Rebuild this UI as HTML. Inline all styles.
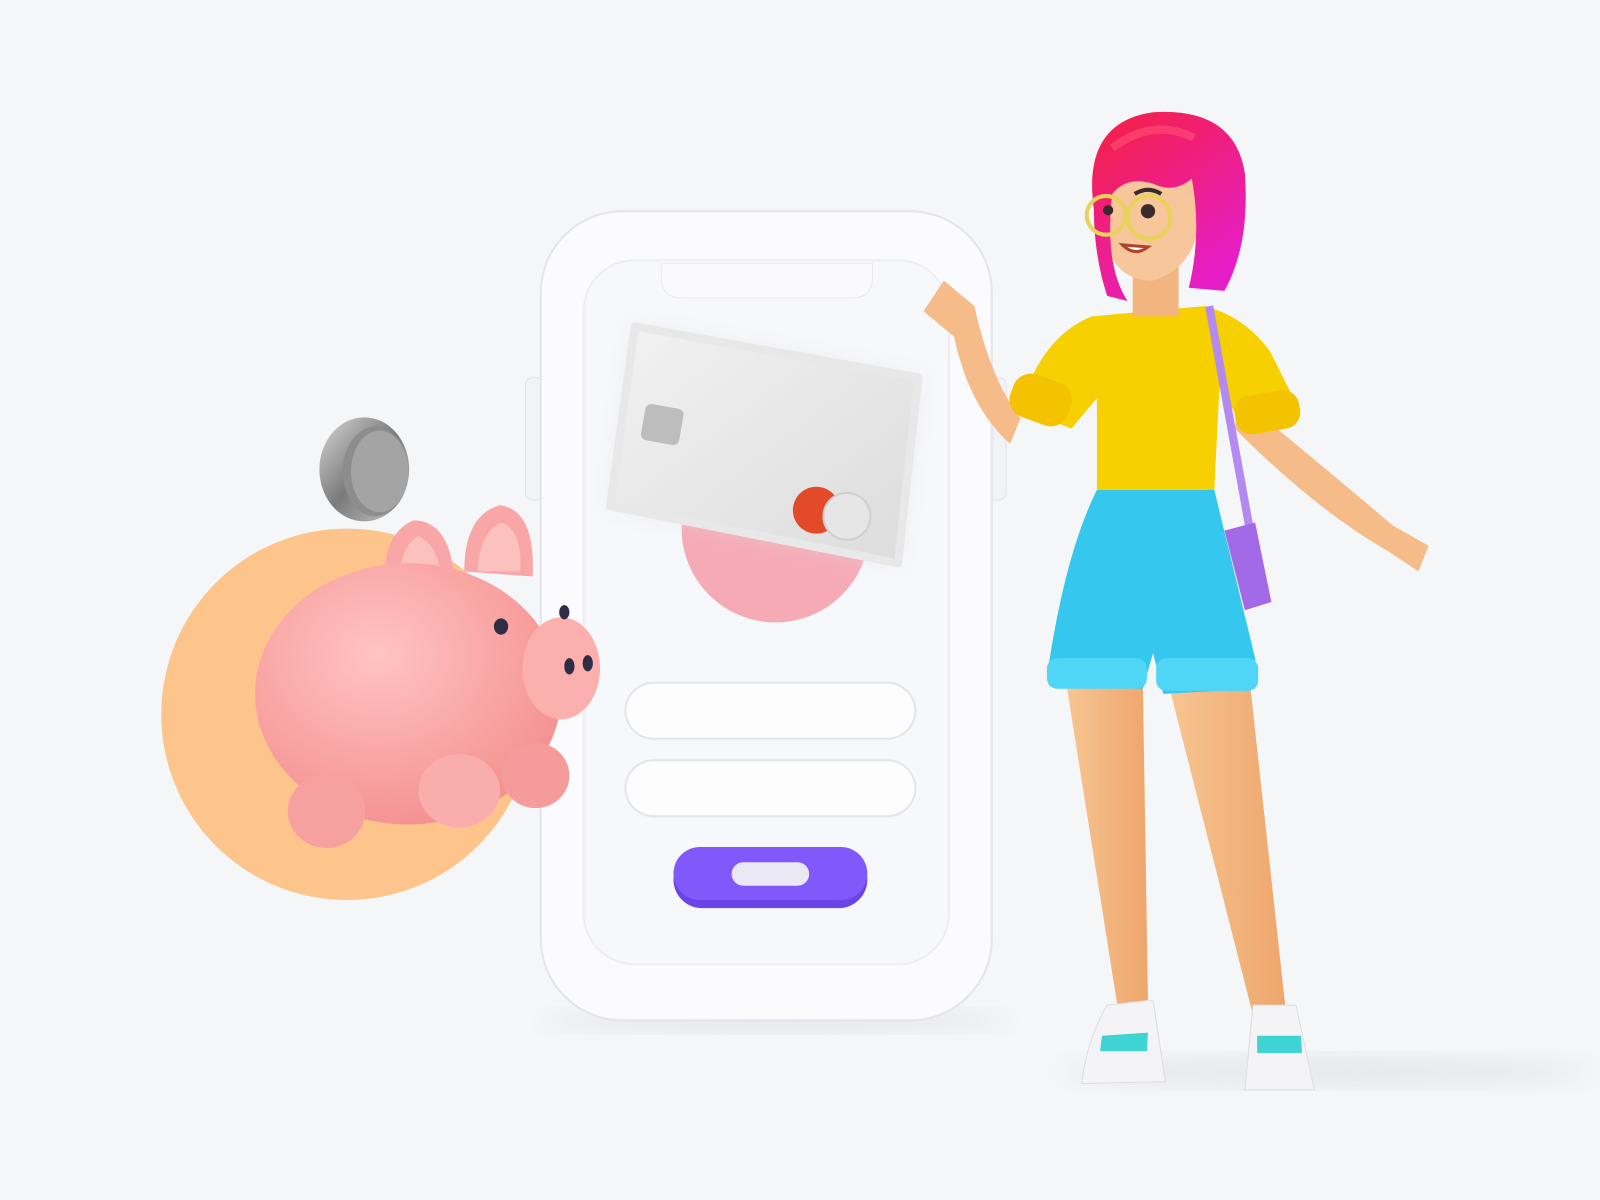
<!DOCTYPE html>
<html><head><meta charset="utf-8"><style>
html,body{margin:0;padding:0;background:#f5f6f8;width:1600px;height:1200px;overflow:hidden}
svg{display:block}
</style></head><body>
<svg width="1600" height="1200" viewBox="0 0 1568 1176" preserveAspectRatio="none" xmlns="http://www.w3.org/2000/svg">
<defs>
<radialGradient id="pig" cx="0.4" cy="0.35" r="0.7"><stop offset="0" stop-color="#ffc4c2"/><stop offset="1" stop-color="#f48f8f"/></radialGradient>
<linearGradient id="coin" x1="0" y1="0" x2="1" y2="1"><stop offset="0" stop-color="#d8d8d8"/><stop offset="0.5" stop-color="#7a7a7a"/><stop offset="1" stop-color="#c8c8c8"/></linearGradient>
<linearGradient id="card" x1="0" y1="0" x2="1" y2="1"><stop offset="0" stop-color="#f2f2f2"/><stop offset="1" stop-color="#dcdcdc"/></linearGradient>
<linearGradient id="hair" x1="0" y1="0" x2="0.6" y2="1"><stop offset="0" stop-color="#f5203e"/><stop offset="1" stop-color="#e61ec8"/></linearGradient>
<linearGradient id="leg" x1="0" y1="0" x2="1" y2="0"><stop offset="0" stop-color="#f7c592"/><stop offset="1" stop-color="#eea66c"/></linearGradient>
<filter id="sh" x="-20%" y="-20%" width="140%" height="140%"><feGaussianBlur stdDeviation="12"/></filter>
<clipPath id="scr"><rect x="572" y="255" width="358" height="690" rx="50"/></clipPath>
</defs>
<rect width="1568" height="1176" fill="#f5f6f8"/>
<ellipse cx="760" cy="1000" rx="230" ry="10" fill="#e3e4ea" filter="url(#sh)"/>
<ellipse cx="1300" cy="1050" rx="260" ry="14" fill="#e6e7ec" filter="url(#sh)"/>
<rect x="515" y="370" width="18" height="120" rx="7" fill="#f2f3f6" stroke="#e2e3e8"/>
<rect x="968" y="370" width="18" height="120" rx="7" fill="#f2f3f6" stroke="#e2e3e8"/>
<rect x="530" y="207" width="442" height="793" rx="80" fill="#fbfbfd" stroke="#e4e5ea" stroke-width="2"/>
<rect x="572" y="255" width="358" height="690" rx="50" fill="#f7f8fb" stroke="#eceef2" stroke-width="2"/>
<path d="M648 258 L855 258 L855 272 Q855 292 835 292 L668 292 Q648 292 648 272Z" fill="#fafafc" stroke="#e8e9ee"/>
<g clip-path="url(#scr)">
<circle cx="760" cy="518" r="92" fill="#f6aab6"/>
</g>
<polygon points="622,320 900,370 880,552 598,496" fill="#e0e0e0" filter="url(#sh)" opacity="0.5"/>
<polygon points="622,320 900,370 880,552 598,496" fill="url(#card)" stroke="#e8e8e8" stroke-linejoin="round" stroke-width="8"/>
<rect x="630" y="398" width="38" height="36" rx="6" fill="#bdbdbd" transform="rotate(10 649 416)"/>
<circle cx="800" cy="500" r="23" fill="#e24a2a"/>
<circle cx="830" cy="506" r="23" fill="#e6e6e6" stroke="#cfcfcf" stroke-width="2"/>
<rect x="613" y="669" width="284" height="55" rx="28" fill="#fdfdfe" stroke="#e4e5ea" stroke-width="2"/>
<rect x="613" y="745" width="284" height="55" rx="28" fill="#fdfdfe" stroke="#e4e5ea" stroke-width="2"/>
<rect x="660" y="834" width="190" height="56" rx="28" fill="#6b44e8"/>
<rect x="660" y="830" width="190" height="52" rx="26" fill="#8159fb"/>
<rect x="717" y="845" width="76" height="23" rx="11.5" fill="#ebe8f6"/>
<circle cx="340" cy="700" r="182" fill="#fdc48c"/>
<ellipse cx="357" cy="460" rx="44" ry="51" fill="url(#coin)"/>
<ellipse cx="368" cy="462" rx="32" ry="44" fill="#8d8d8d"/>
<ellipse cx="372" cy="462" rx="28" ry="40" fill="#a4a4a4"/>
<path d="M378 590 Q370 525 405 510 Q440 510 445 565Z" fill="#f8a7a6"/>
<path d="M390 575 Q392 535 410 525 Q430 535 432 565Z" fill="#fcc0bd"/>
<path d="M455 560 Q455 505 490 495 Q525 500 522 565Z" fill="#f8a7a6"/>
<path d="M468 560 Q470 520 492 512 Q512 520 510 560Z" fill="#fcc0bd"/>
<ellipse cx="400" cy="680" rx="150" ry="128" fill="url(#pig)"/>
<ellipse cx="320" cy="795" rx="38" ry="36" fill="#f7a0a0"/>
<ellipse cx="450" cy="775" rx="40" ry="36" fill="#f9adac"/>
<ellipse cx="525" cy="760" rx="33" ry="32" fill="#f59b9b"/>
<ellipse cx="550" cy="655" rx="38" ry="50" fill="#fbb0ae"/>
<ellipse cx="558" cy="653" rx="5" ry="8" fill="#2f2d45"/>
<ellipse cx="576" cy="650" rx="5" ry="8" fill="#2f2d45"/>
<ellipse cx="491" cy="614" rx="7" ry="8" fill="#2f2d45"/>
<ellipse cx="553" cy="600" rx="5" ry="7" fill="#2f2d45"/>
<path d="M1045 670 L1120 670 L1125 980 L1095 985 Z" fill="url(#leg)"/>
<path d="M1145 670 L1225 670 L1260 990 L1228 995 Z" fill="url(#leg)"/>
<path d="M1085 985 L1130 980 L1142 1060 L1060 1062 Q1065 1020 1085 985Z" fill="#f4f4f6" stroke="#dcdde2"/>
<path d="M1228 985 L1270 985 L1288 1068 L1220 1068Z" fill="#f4f4f6" stroke="#dcdde2"/>
<path d="M1080 1015 L1125 1012 L1124 1030 L1078 1030Z" fill="#3fd4d4"/>
<path d="M1232 1015 L1275 1015 L1276 1032 L1232 1032Z" fill="#3fd4d4"/>
<path d="M1075 480 L1190 480 L1230 645 L1230 675 L1140 680 L1130 640 L1120 675 L1028 672 L1028 650 Q1045 540 1075 480Z" fill="#36c7ef"/>
<rect x="1026" y="645" width="98" height="30" rx="10" fill="#4fd6f6"/>
<rect x="1133" y="645" width="100" height="32" rx="10" fill="#4fd6f6"/>
<path d="M1215 390 Q1300 460 1365 515 L1400 535 L1390 560 L1360 540 Q1290 500 1210 420Z" fill="#f5bb88"/>
<path d="M1000 410 Q970 370 955 300 L925 275 L905 305 L935 330 Q950 400 990 435Z" fill="#f5bb88"/>
<path d="M1070 310 L1180 300 Q1220 310 1245 345 L1270 395 L1220 420 L1195 380 L1190 480 L1075 480 L1075 390 L1050 420 L1000 400 Q1020 330 1070 310Z" fill="#f6d000"/>
<rect x="990" y="370" width="60" height="44" rx="18" fill="#f3c200" transform="rotate(20 1020 392)"/>
<rect x="1210" y="385" width="64" height="38" rx="16" fill="#f3c200" transform="rotate(-10 1242 404)"/>
<path d="M1185 300 L1225 520" stroke="#b58af0" stroke-width="8"/>
<path d="M1200 520 L1230 512 L1246 590 L1220 598Z" fill="#a36ae8"/>
<rect x="1110" y="260" width="45" height="50" fill="#f2b580"/>
<path d="M1080 175 Q1080 145 1120 140 Q1170 140 1175 200 Q1178 260 1130 275 Q1090 275 1082 230Z" fill="#f7c69a"/>
<path d="M1072 205 Q1060 120 1130 110 Q1210 105 1220 170 Q1225 240 1200 285 L1165 282 Q1178 230 1168 175 Q1150 190 1130 180 Q1105 172 1090 190 Q1082 260 1105 295 L1085 290 Q1072 250 1072 205Z" fill="url(#hair)"/>
<path d="M1090 145 Q1130 115 1170 135" stroke="#ff5a7a" stroke-width="8" fill="none" opacity="0.5"/>
<circle cx="1084" cy="211" r="19" fill="none" stroke="#e8d25a" stroke-width="4"/>
<circle cx="1126" cy="213" r="21" fill="none" stroke="#e8d25a" stroke-width="4"/>
<circle cx="1125" cy="207" r="7" fill="#3a2a2a"/>
<circle cx="1086" cy="206" r="5" fill="#3a2a2a"/>
<path d="M1112 190 Q1125 182 1138 190" stroke="#3a2a2a" stroke-width="4" fill="none"/>
<path d="M1100 240 Q1112 252 1125 242 Z" fill="#fff" stroke="#b0432a" stroke-width="3"/>
</svg>
</body></html>
